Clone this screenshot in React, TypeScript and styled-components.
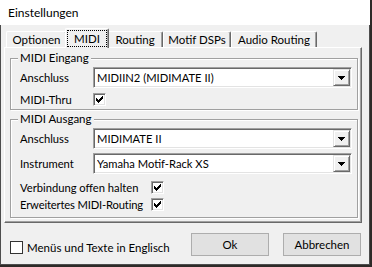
import React from 'react';
import styled, { createGlobalStyle } from 'styled-components';

const GlobalStyle = createGlobalStyle`
  html, body { margin: 0; padding: 0; background: #2e2a28; }
  body {
    font-family: Lato, "Noto Sans", "Liberation Sans", sans-serif;
    font-size: 11px;
    color: #000;
  }
  * { box-sizing: border-box; }
`;

const Window = styled.div`
  width: 370px;
  height: 265px;
  display: flex;
  flex-direction: column;
  background: #f0f0f0;
`;

const TitleBar = styled.div`
  height: 25px;
  flex: none;
  background: #fff;
  display: flex;
  align-items: center;
  padding-left: 8px;
  font-size: 12px;
`;

const Body = styled.div`
  flex: 1;
  display: flex;
  flex-direction: column;
  border-left: 1px solid #4d4d4d;
  border-right: 1px solid #4d4d4d;
  border-bottom: 1px solid #4d4d4d;
  padding: 3px 7px 0 3px;
`;

const TabStrip = styled.div`
  display: flex;
  align-items: flex-end;
  height: 19px;
  padding-left: 2px;
  position: relative;
  z-index: 2;
`;

const Tab = styled.div<{ $active?: boolean; $w: number }>`
  position: relative;
  width: ${p => p.$w + (p.$active ? 4 : 0)}px;
  height: ${p => (p.$active ? 20 : 16)}px;
  margin: 0 ${p => (p.$active ? -2 : 0)}px ${p => (p.$active ? -1 : 0)}px;
  z-index: ${p => (p.$active ? 2 : 1)};
  background: #f0f0f0;
  border-left: 1px solid #fff;
  border-top: 1px solid #fff;
  border-right: 1px solid #696969;
  box-shadow: inset -1px 0 0 #a0a0a0;
  border-top-left-radius: 2px;
  border-top-right-radius: 2px;
  display: flex;
  align-items: ${p => (p.$active ? 'flex-start' : 'center')};
  justify-content: center;
  padding-top: ${p => (p.$active ? 1 : 0)}px;
  white-space: nowrap;
  font-size: 11.5px;
`;

const FocusRing = styled.span`
  display: flex;
  align-items: center;
  justify-content: center;
  width: 40px;
  height: 17px;
  border: 1px dotted #000;
`;

const Panel = styled.div`
  height: 176px;
  flex: none;
  border-top: 1px solid #fff;
  border-left: 1px solid #fff;
  border-right: 1px solid #696969;
  border-bottom: 1px solid #696969;
  box-shadow: inset -1px -1px 0 #a0a0a0;
  padding: 3px 3px 0 5px;
  position: relative;
  z-index: 1;
`;

const Group = styled.fieldset<{ $gap?: number }>`
  margin: ${p => p.$gap ?? 0}px 0 0 0;
  padding: 2px 4px ${p => (p.$gap ? 4 : 1)}px 9px;
  border: 1px solid #a0a0a0;
  box-shadow: inset 1px 1px 0 #fff, 1px 1px 0 #fff;
  min-width: 0;
  display: flex;
  flex-direction: column;
`;

const Legend = styled.legend`
  padding: 0 2px;
  margin-left: -2px;
  line-height: 14px;
  font-size: 11.5px;
  background: #f0f0f0;
`;

const Row = styled.div<{ $h: number; $mt?: number; $lw: number }>`
  display: grid;
  grid-template-columns: ${p => p.$lw}px 1fr;
  align-items: center;
  height: ${p => p.$h}px;
  margin-top: ${p => p.$mt ?? 0}px;
`;

const Label = styled.span<{ $tight?: boolean }>`
  white-space: nowrap;
  font-size: 11.2px;
  letter-spacing: ${p => (p.$tight ? '-0.15px' : 'normal')};
`;

const Combo = styled.div`
  height: 21px;
  width: 259px;
  display: flex;
  align-items: center;
  background: #fff;
  border-top: 1px solid #a0a0a0;
  border-left: 1px solid #a0a0a0;
  border-right: 1px solid #fff;
  border-bottom: 1px solid #fff;
  box-shadow: inset 1px 1px 0 #696969, inset -1px -1px 0 #e3e3e3;
  padding: 1px 1px 1px 3px;
`;

const ComboText = styled.span`
  flex: 1;
  white-space: nowrap;
  overflow: hidden;
  font-size: 11.2px;
`;

const DropButton = styled.span`
  width: 17px;
  height: 17px;
  flex: none;
  display: flex;
  align-items: center;
  justify-content: center;
  background: #f0f0f0;
  border-top: 1px solid #e3e3e3;
  border-left: 1px solid #e3e3e3;
  border-right: 1px solid #696969;
  border-bottom: 1px solid #696969;
  box-shadow: inset 1px 1px 0 #fff, inset -1px -1px 0 #a0a0a0;
`;

const CheckBox = styled.span<{ $flat?: boolean }>`
  width: 13px;
  height: 13px;
  flex: none;
  display: flex;
  align-items: center;
  justify-content: center;
  background: #fff;
  ${p =>
    p.$flat
      ? `border: 1px solid #333;`
      : `border-top: 1px solid #a0a0a0;
         border-left: 1px solid #a0a0a0;
         border-right: 1px solid #fff;
         border-bottom: 1px solid #fff;
         box-shadow: inset 1px 1px 0 #696969, inset -1px -1px 0 #e3e3e3;`}
`;

const BottomRow = styled.div`
  display: flex;
  align-items: flex-start;
  padding-top: 10px;
  padding-right: 1px;
`;

const BottomCheck = styled.label`
  display: flex;
  align-items: center;
  gap: 4px;
  margin: 8px 0 0 6px;
  flex: 1;
  min-width: 0;
  white-space: nowrap;
  font-size: 11.5px;
`;

const Button = styled.button`
  width: 78px;
  height: 23px;
  margin-left: 14px;
  background: #e1e1e1;
  border: 1px solid #adadad;
  font-family: inherit;
  font-size: 11.5px;
  color: #000;
  padding: 0;
`;

const CHECK = [
  '......#',
  '.....##',
  '#...###',
  '##.###.',
  '#####..',
  '.###...',
  '..#....',
];

const CheckMark = () => (
  <svg width="7" height="7" viewBox="0 0 7 7" shapeRendering="crispEdges">
    {CHECK.flatMap((row, y) =>
      row.split('').map((c, x) => (c === '#' ? <rect key={`${x}-${y}`} x={x} y={y} width="1" height="1" fill="#000" /> : null))
    )}
  </svg>
);

const Arrow = () => (
  <svg width="7" height="4" viewBox="0 0 7 4" shapeRendering="crispEdges">
    <rect x="0" y="0" width="7" height="1" fill="#000" />
    <rect x="1" y="1" width="5" height="1" fill="#000" />
    <rect x="2" y="2" width="3" height="1" fill="#000" />
    <rect x="3" y="3" width="1" height="1" fill="#000" />
  </svg>
);

const Select = ({ value }: { value: string }) => (
  <Combo>
    <ComboText>{value}</ComboText>
    <DropButton>
      <Arrow />
    </DropButton>
  </Combo>
);

const Check = ({ flat }: { flat?: boolean }) => (
  <CheckBox $flat={flat}>{!flat && <CheckMark />}</CheckBox>
);

const tabs = [
  { label: 'Optionen', w: 61 },
  { label: 'MIDI', w: 40, active: true },
  { label: 'Routing', w: 56 },
  { label: 'Motif DSPs', w: 68 },
  { label: 'Audio Routing', w: 86 },
];

export default function App() {
  return (
    <>
      <GlobalStyle />
      <Window>
        <TitleBar>Einstellungen</TitleBar>
        <Body>
          <TabStrip>
            {tabs.map(t => (
              <Tab key={t.label} $active={t.active} $w={t.w}>
                {t.active ? <FocusRing>{t.label}</FocusRing> : t.label}
              </Tab>
            ))}
          </TabStrip>
          <Panel>
            <Group>
              <Legend>MIDI Eingang</Legend>
              <Row $h={21} $lw={73}>
                <Label>Anschluss</Label>
                <Select value="MIDIIN2 (MIDIMATE II)" />
              </Row>
              <Row $h={17} $mt={3} $lw={73}>
                <Label>MIDI-Thru</Label>
                <Check />
              </Row>
            </Group>
            <Group $gap={2}>
              <Legend>MIDI Ausgang</Legend>
              <Row $h={21} $lw={73}>
                <Label>Anschluss</Label>
                <Select value="MIDIMATE II" />
              </Row>
              <Row $h={21} $mt={4} $lw={73}>
                <Label>Instrument</Label>
                <Select value="Yamaha Motif-Rack XS" />
              </Row>
              <Row $h={17} $mt={5} $lw={131}>
                <Label>Verbindung offen halten</Label>
                <Check />
              </Row>
              <Row $h={17} $lw={131}>
                <Label $tight>Erweitertes MIDI-Routing</Label>
                <Check />
              </Row>
            </Group>
          </Panel>
          <BottomRow>
            <BottomCheck>
              <Check flat />
              <span>Menüs und Texte in Englisch</span>
            </BottomCheck>
            <Button>Ok</Button>
            <Button>Abbrechen</Button>
          </BottomRow>
        </Body>
      </Window>
    </>
  );
}
